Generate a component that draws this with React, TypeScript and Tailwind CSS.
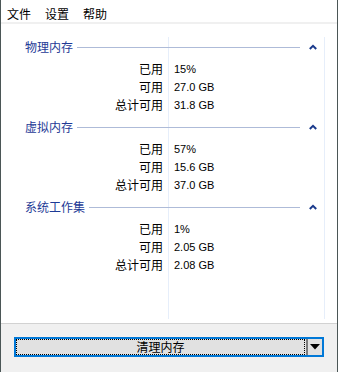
import { ReactElement } from "react";

type Stat = { label: string; value: string };

type Group = { title: string; stats: Stat[] };

const groups: Group[] = [
  {
    title: "物理内存",
    stats: [
      { label: "已用", value: "15%" },
      { label: "可用", value: "27.0 GB" },
      { label: "总计可用", value: "31.8 GB" },
    ],
  },
  {
    title: "虚拟内存",
    stats: [
      { label: "已用", value: "57%" },
      { label: "可用", value: "15.6 GB" },
      { label: "总计可用", value: "37.0 GB" },
    ],
  },
  {
    title: "系统工作集",
    stats: [
      { label: "已用", value: "1%" },
      { label: "可用", value: "2.05 GB" },
      { label: "总计可用", value: "2.08 GB" },
    ],
  },
];

const ChevronUp = () => (
  <svg width="8" height="6" viewBox="0 0 8 6" className="shrink-0">
    <path d="M0.8 5 L4 1.8 L7.2 5" fill="none" stroke="#1a3a8c" strokeWidth="2" />
  </svg>
);

const GroupBlock = ({ title, stats }: Group): ReactElement => {
  return (
    <div className="mt-[2px] first:mt-0">
      <div className="flex h-[22px] items-center pl-[24px] pr-[20px]">
        <span className="text-[12px] leading-[14px] text-[#1e3a96]">{title}</span>
        <div className="ml-[4px] mr-[9px] h-px flex-1 bg-[#aebbd8]" />
        <ChevronUp />
      </div>
      <div className="mt-[2px]">
        {stats.map((stat) => {
          return (
            <div key={stat.label} className="flex h-[18px] items-center">
              <span className="w-[167px] pr-[5px] text-right text-[12px] leading-[14px] text-black">
                {stat.label}
              </span>
              <span className="pl-[6px] font-['Liberation_Sans',Arial,sans-serif] text-[11px] leading-[14px] text-black">
                {stat.value}
              </span>
            </div>
          );
        })}
      </div>
    </div>
  );
};

export default function App() {
  return (
    <div className="flex h-[372px] w-[338px] flex-col border-x border-[#4b5656] bg-white font-['Noto_Sans_CJK_SC','Noto_Sans',sans-serif]">
      <div className="flex h-[22px] pl-[6px] text-[12px] text-black">
        <span className="pt-[7px] leading-[14px]">文件</span>
        <span className="ml-[14px] pt-[7px] leading-[14px]">设置</span>
        <span className="ml-[14px] pt-[7px] leading-[14px]">帮助</span>
      </div>
      <div className="h-[2px] bg-[#f0f0f0]" />

      <div className="relative flex-1 bg-white pt-[12px]">
        <div className="pointer-events-none absolute bottom-[4px] left-[167px] top-[13px] w-px bg-[#e6eefa]" />
        <div className="pointer-events-none absolute bottom-[4px] left-[323px] top-[13px] w-px bg-[#e6eefa]" />
        <div className="relative">
          {groups.map((group) => {
            return <GroupBlock key={group.title} {...group} />;
          })}
        </div>
      </div>

      <div className="h-[49px] border-t border-[#d2d2d2] bg-[#f0f0f0] pl-[13px] pt-[13px]">
        <div className="flex h-[20px] w-[310px] border-2 border-[#0078d7] bg-[#e1e1e1]">
          <div className="flex w-[289px] items-center justify-center border border-dotted border-black text-[12px] leading-[14px] text-black">
            清理内存
          </div>
          <div className="ml-px w-[2px] bg-[#7a7a7a]" />
          <div className="flex flex-1 items-center justify-center">
            <svg width="10" height="6" viewBox="0 0 10 6">
              <polygon points="0,0 10,0 5,5.5" fill="#000" />
            </svg>
          </div>
        </div>
      </div>
    </div>
  );
}
